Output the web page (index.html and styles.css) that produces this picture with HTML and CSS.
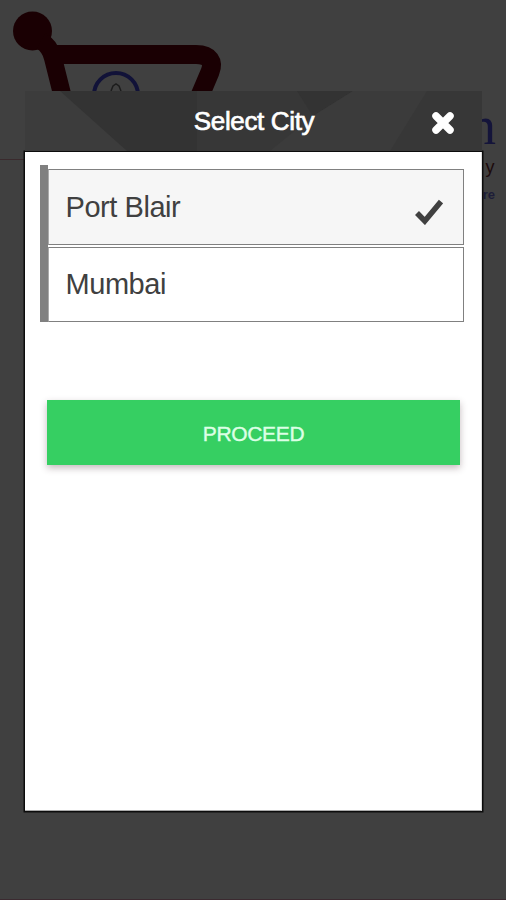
FILE: index.html
```html
<!DOCTYPE html>
<html lang="en">
<head>
<meta charset="utf-8">
<title>Select City</title>
<link rel="stylesheet" href="styles.css">
</head>
<body>
<div class="backdrop" aria-hidden="true">
  <svg class="logo" width="506" height="210" viewBox="0 0 506 210">
    <circle cx="32.500" cy="31" r="19.500" fill="#1a0003"/>
    <path d="M41 41 Q50 46 53 58 L63 98" fill="none" stroke="#1a0003" stroke-width="18"/>
    <path d="M50 54.500H196C210 54.500 214 62 210 72L199 98" fill="none" stroke="#1a0003" stroke-width="19"/>
    <circle cx="116" cy="95" r="22" fill="none" stroke="#111238" stroke-width="4"/>
    <path d="M111 91L113 86L116 84L119 86L121 91" fill="none" stroke="#1c1c1c" stroke-width="1.500"/>
    <path d="M0 159.500H26" stroke="#3a2a2d"/>
    <text class="logo-name" x="496" y="144" text-anchor="end">n</text>
    <text class="logo-line" x="494.500" y="173" text-anchor="end">y</text>
    <text class="logo-sub" x="495" y="199" text-anchor="end">re</text>
  </svg>
</div>
<main class="dialog">
  <header class="bar">
    <svg class="bar-art" width="457" height="60" viewBox="0 0 457 60" aria-hidden="true">
      <path d="M35 0H457V60H102Z" fill="#333"/>
      <path d="M172 0H272L288 25L328 0H457V60H172Z" fill="#373737"/>
      <path d="M328 0H402L365 60H245L288 25Z" fill="#3b3b3b"/>
    </svg>
    <h1 class="title">Select City</h1>
    <button class="close" aria-label="Close">
      <svg width="24" height="24" viewBox="0 0 24 24"><path d="M5 5L19 19M19 5L5 19" fill="none" stroke="#fff" stroke-width="7.500" stroke-linecap="round"/></svg>
    </button>
  </header>
  <section class="panel">
    <ul class="cities">
      <li class="city selected"><span>Port Blair</span>
        <svg width="28" height="26" viewBox="0 0 28 26"><path d="M2 14L9.800 22L26 2.500" fill="none" stroke="#404040" stroke-width="5.500"/></svg>
      </li>
      <li class="city"><span>Mumbai</span></li>
    </ul>
    <button class="proceed">PROCEED</button>
  </section>
</main>
</body>
</html>
```
FILE: styles.css
```css
* { box-sizing: border-box; }
body {
  margin: 0;
  height: 900px;
  padding: 91px 24px 0 25px;
  overflow: hidden;
  background: #404040;
  border-bottom: 1px solid #3b2a30;
  font-family: "Liberation Sans", Arial, sans-serif;
}
.backdrop { position: absolute; inset: 0; }
.logo { display: block; }
.logo-name { font: 54px "Liberation Serif", serif; fill: #14143a; }
.logo-line { font: 18px "Liberation Sans", sans-serif; fill: #1c0a0c; }
.logo-sub { font: bold 13px "Liberation Sans", sans-serif; fill: #1d1d38; }

.dialog { position: relative; }
.bar {
  position: relative;
  display: grid;
  grid-template-columns: 1fr auto 1fr;
  align-items: center;
  height: 60px;
  background: #3c3c3c;
}
.bar-art { position: absolute; inset: 0; }
.title {
  position: relative;
  grid-column: 2;
  margin: 0 0 0 1px;
  color: #fff;
  font-size: 26px;
  font-weight: 400;
  letter-spacing: -0.35px;
  line-height: 60px;
  -webkit-text-stroke: 0.7px #fff;
}
.close {
  position: relative;
  justify-self: end;
  margin: 4px 27px 0 0;
  padding: 0;
  width: 24px;
  height: 24px;
  border: 0;
  background: none;
}
.close svg { display: block; }

.panel {
  height: 659px;
  margin-top: 1px;
  padding: 13px 17px 0 15px;
  background: #fff;
  border-right: 1px solid #ddd;
  border-bottom: 1px solid #aaa;
  box-shadow: 0 0 0 1.500px #0c0c0c;
}
.cities {
  display: flex;
  flex-direction: column;
  gap: 2px;
  margin: 0;
  padding: 4px 0 0;
  list-style: none;
  border-left: 8px solid #808080;
}
.city {
  display: flex;
  justify-content: space-between;
  height: 76px;
  padding: 0 20px 0 16.500px;
  border: 1px solid #808080;
  border-left-color: #aaa;
  color: #404040;
  font-size: 29px;
  letter-spacing: -0.45px;
  line-height: 74px;
}
.city + .city {
  height: 75px;
  line-height: 73px;
}
.selected { background: #f6f6f6; }
.city svg { margin-top: 29px; }
.proceed {
  display: block;
  width: 413px;
  height: 65px;
  margin: 78px 0 0 7px;
  padding: 3px 0 0;
  border: 0;
  background: #36cf62;
  box-shadow: 0 3px 7px rgba(70, 40, 50, 0.32);
  color: #dcffe5;
  font: 21px "Liberation Sans", Arial, sans-serif;
  letter-spacing: -0.35px;
  -webkit-text-stroke: 0.4px #dcffe5;
}
```
